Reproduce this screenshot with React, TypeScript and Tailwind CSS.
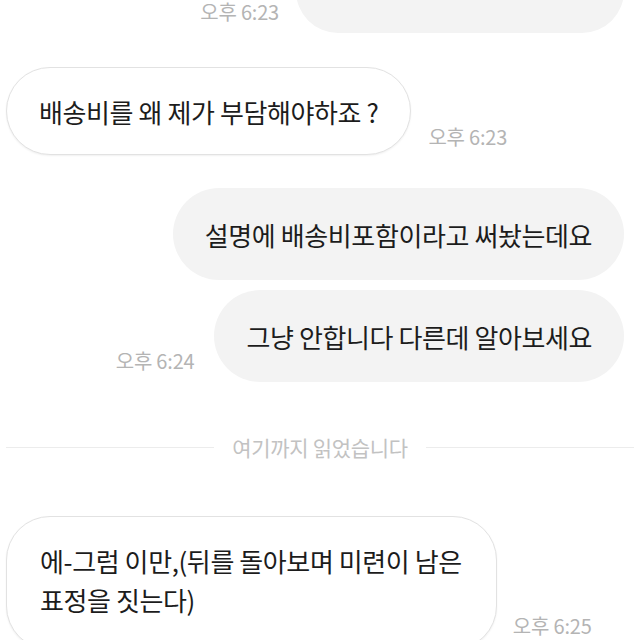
const font = { fontFamily: '"Noto Sans CJK KR", "Noto Sans", sans-serif' };

function Time({ children, className = "" }: { children: string; className?: string }) {
  return (
    <span className={`shrink-0 text-[20px] leading-none text-[#b4b4b4] tracking-[-0.2px] ${className}`}>
      {children}
    </span>
  );
}

export default function App() {
  return (
    <div className="w-[640px] h-[640px] overflow-hidden bg-white text-[#1c1c1c]" style={font}>
      {/* partial bubble at the top */}
      <div className="flex items-end justify-end gap-[17px] pr-[16px] -mt-[57px]">
        <Time className="mb-[11px]">오후 6:23</Time>
        <div className="w-[328px] h-[90px] rounded-[42px] bg-[#f3f3f3]" />
      </div>

      {/* received */}
      <div className="flex items-end gap-[17px] pl-[6px] mt-[34px]">
        <div className="h-[88px] flex items-center px-[32px] rounded-[44px] border border-[#e2e2e2] bg-white shadow-[0_1px_2px_rgba(0,0,0,0.06)]">
          <span className="text-[26px] tracking-[-0.4px]">배송비를 왜 제가 부담해야하죠 ?</span>
        </div>
        <Time className="mb-[8px]">오후 6:23</Time>
      </div>

      {/* sent */}
      <div className="flex flex-col items-end gap-[10px] pr-[16px] mt-[33px]">
        <div className="h-[92px] flex items-center px-[32px] rounded-[46px] bg-[#f3f3f3]">
          <span className="text-[26px] tracking-[-0.4px]">설명에 배송비포함이라고 써놨는데요</span>
        </div>
        <div className="flex items-end gap-[20px]">
          <Time className="mb-[11px]">오후 6:24</Time>
          <div className="h-[92px] flex items-center px-[32px] rounded-[46px] bg-[#f3f3f3]">
            <span className="text-[26px] tracking-[-0.4px]">그냥 안합니다 다른데 알아보세요</span>
          </div>
        </div>
      </div>

      {/* read marker */}
      <div className="flex items-center gap-[18px] px-[6px] mt-[55px]">
        <div className="flex-1 h-px bg-[#ececec]" />
        <span className="text-[21px] leading-none text-[#c2c2c2] tracking-[-0.3px]">여기까지 읽었습니다</span>
        <div className="flex-1 h-px bg-[#ececec]" />
      </div>

      {/* received */}
      <div className="flex items-end gap-[16px] pl-[6px] mt-[58px]">
        <div className="pt-[24px] pb-[30px] pl-[33px] pr-[34px] rounded-[44px] border border-[#e2e2e2] bg-white shadow-[0_1px_2px_rgba(0,0,0,0.06)]">
          <p className="text-[26px] leading-[39px] tracking-[-0.4px]">
            에-그럼 이만,(뒤를 돌아보며 미련이 남은
            <br />
            표정을 짓는다)
          </p>
        </div>
        <Time className="mb-[14px]">오후 6:25</Time>
      </div>
    </div>
  );
}
